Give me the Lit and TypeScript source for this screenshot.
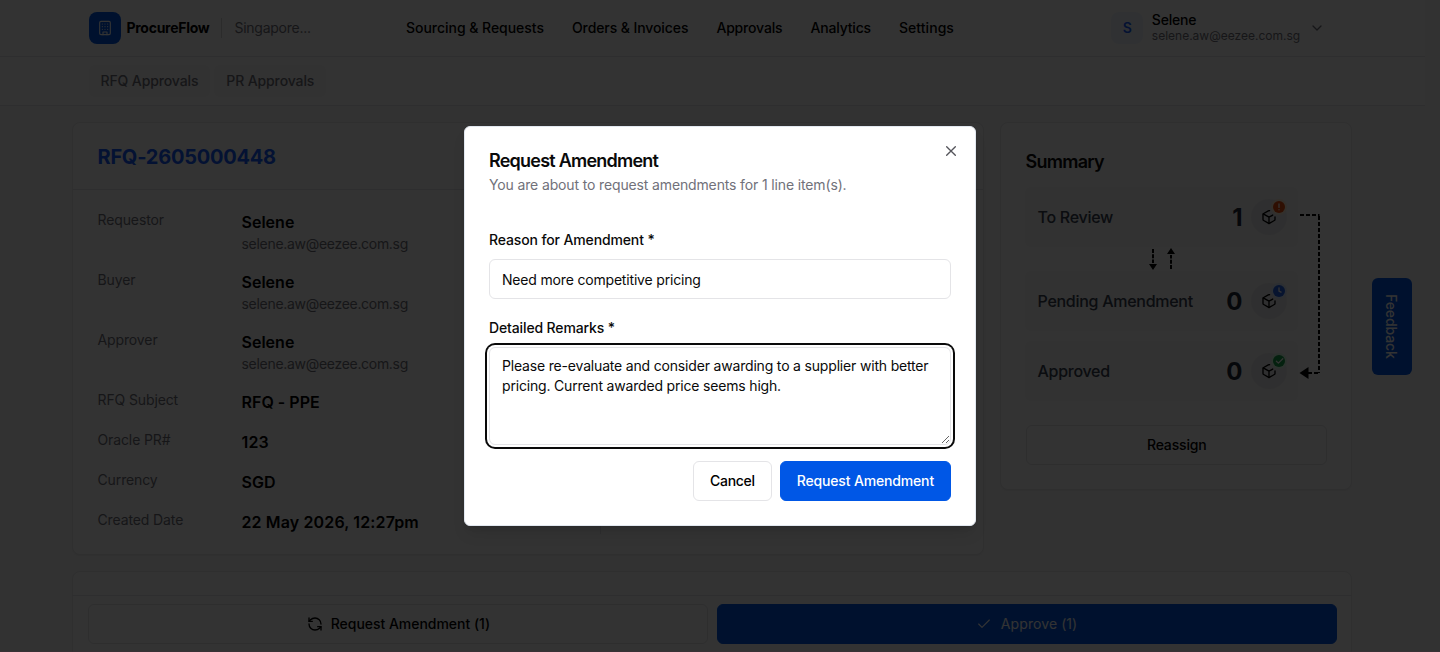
import { LitElement, html, css, svg } from "lit";
import { customElement } from "lit/decorators.js";

const stroke = (size: number, body: unknown, width = 2) => html`<svg
  width=${size} height=${size} viewBox="0 0 24 24" fill="none" stroke="currentColor"
  stroke-width=${width} stroke-linecap="round" stroke-linejoin="round">${body}</svg>`;

const building = svg`<rect x="4" y="2" width="16" height="20" rx="2"/><path d="M9 22v-4h6v4M8 6h.01M16 6h.01M12 6h.01M12 10h.01M12 14h.01M16 10h.01M16 14h.01M8 10h.01M8 14h.01"/>`;
const chevron = svg`<path d="m6 9 6 6 6-6"/>`;
const cross = svg`<path d="M18.500 5.500 5.500 18.500M5.500 5.500l13 13"/>`;
const check = svg`<path d="M20 6 9 17l-5-5"/>`;
const refresh = svg`<path d="M21 12a9 9 0 0 0-9-9 9.75 9.75 0 0 0-6.74 2.74L3 8"/><path d="M3 3v5h5"/><path d="M3 12a9 9 0 0 0 9 9 9.75 9.75 0 0 0 6.74-2.74L21 16"/><path d="M16 16h5v5"/>`;
const cube = svg`<path d="M12.8 2.6a2 2 0 0 0-1.8.1L4 6.7A2 2 0 0 0 3 8.5v7a2 2 0 0 0 1 1.8l7 4a2 2 0 0 0 2 0l7-4a2 2 0 0 0 1-1.8v-3.7"/><path d="M3.3 7.3 12 12.3l5.6-3.2M12 22V12.3"/>`;

const people = ["Requestor", "Buyer", "Approver"];
const facts = [
  ["RFQ Subject", "RFQ - PPE"],
  ["Oracle PR#", "123"],
  ["Currency", "SGD"],
  ["Created Date", "22 May 2026, 12:27pm"],
];
const email = "selene.aw@eezee.com.sg";

const badges: Record<string, unknown> = {
  review: svg`<path d="M6 3v3.4M6 8.7v.1"/>`,
  pending: svg`<path d="M6 2.8V6.2l2 1"/>`,
  approved: svg`<path d="m3.4 6.2 2 1.9 4.4-4.4"/>`,
};

@customElement("app-root")
export class AppRoot extends LitElement {
  static styles = css`
    :host {
      display: block;
      position: relative;
      width: 1440px;
      height: 652px;
      overflow: hidden;
      background: #fafafa;
      color: #0a0a0a;
      font: 14px/20px Inter, "Liberation Sans", sans-serif;
    }
    * { box-sizing: border-box; }
    svg { display: block; flex: none; }
    h1, h2, p { margin: 0; }
    .page { width: 1425px; height: 652px; overflow: hidden; }
    .wrap { width: 1280px; margin-left: 72px; padding: 0 16px 0 16.5px; display: flex; align-items: center; }
    .top { background: #fff; border-bottom: 1px solid #e5e7eb; color: #000; }
    .top .wrap { height: 56px; }
    .brand { width: 317.5px; display: flex; align-items: center; }
    .logo { width: 32px; height: 32px; border-radius: 8px; background: #0057e6; color: #fff; display: grid; place-items: center; }
    .name { margin-left: 6px; font-weight: 700; letter-spacing: -0.28px; }
    .org { margin-left: 12px; padding-left: 12px; border-left: 1px solid #d4d4d8; color: #71717a; letter-spacing: -0.25px; }
    .nav { display: flex; gap: 28px; font-weight: 500; white-space: nowrap; letter-spacing: -0.03px; }
    .nav span:nth-child(2) { letter-spacing: -0.09px; }
    .nav span:nth-child(3), .nav span:nth-child(4) { letter-spacing: -0.17px; }
    .nav span:nth-child(5) { letter-spacing: 0.05px; }
    .user { margin-left: auto; padding-right: 11.2px; display: flex; align-items: center; color: #71717a; }
    .avatar { width: 32px; height: 32px; border-radius: 8px; background: #eff6ff; color: #155dfc; font-weight: 600; display: grid; place-items: center; margin-right: 8.5px; }
    .who { width: 157px; font-size: 12px; line-height: 14px; padding-bottom: 3px; }
    .who b { display: block; font-size: 14px; line-height: 18px; font-weight: 500; color: #000; letter-spacing: -0.2px; }
    .sub { border-bottom: 1px solid #e5e7eb; background: #fff; }
    .sub .wrap { height: 48px; gap: 4px; }
    .tab { height: 32px; padding: 6px 12px; border-radius: 6px; background: #f8f8f8; color: #71717a; font-weight: 500; letter-spacing: -0.12px; }
    .main { width: 1280px; margin: 16px 0 0 72px; display: grid; grid-template-columns: 912px 352px; gap: 16px; align-items: start; }
    .card { background: #fff; border: 1px solid #e9eaec; border-radius: 8px; box-shadow: 0 1px 2px rgb(0 0 0 / 6%); }
    .head { height: 67px; padding: 20px 24.5px; border-bottom: 1px solid #e5e7eb; }
    .head h1 { font-size: 20px; line-height: 28px; font-weight: 700; color: #155dfc; letter-spacing: -0.25px; }
    .body { padding: 20px 24.5px; display: grid; grid-template-columns: 502px 1fr; }
    .rows { display: grid; gap: 16px; }
    .row { display: grid; grid-template-columns: 144px 1fr; color: #71717a; letter-spacing: -0.12px; }
    .mail { letter-spacing: -0.3px; }
    .row b { display: block; font-size: 16px; line-height: 24px; font-weight: 600; color: #000; letter-spacing: 0.02px; }
    .row b.num { letter-spacing: 0.13px; }
    .rule { border-left: 1px solid #e5e7eb; }
    .summary { padding: 24px 24px 24px 24.5px; }
    .title { font-size: 18px; line-height: 28px; font-weight: 600; letter-spacing: -0.77px; color: #0a0a0a; }
    .summary .title { padding-top: 1px; height: 28px; letter-spacing: -0.75px; }
    .flow { display: grid; grid-template-columns: 273px 29px; margin: 12px 0 0 -0.5px; }
    .stat { height: 60px; padding: 12px 11.5px 12px 12.5px; border-radius: 6px; background: #f8f8f8; display: flex; align-items: center; font-size: 16px; font-weight: 500; color: #374151; letter-spacing: -0.28px; }
    .stat strong { margin: 0 8px 0 auto; padding-top: 2px; font-size: 24px; font-weight: 700; color: #1f2937; letter-spacing: 0; }
    .disc { position: relative; width: 36px; height: 36px; border-radius: 50%; background: #ececee; color: #000; display: grid; place-items: center; }
    .badge { position: absolute; right: 2px; top: 2px; width: 12px; height: 12px; border-radius: 50%; stroke: #fff; }
    .badge.review { background: #ea4c0c; box-shadow: 0 0 0 2px #ffedd5; }
    .badge.pending { background: #2563eb; box-shadow: 0 0 0 2px #dbeafe; }
    .badge.approved { background: #16a34a; box-shadow: 0 0 0 2px #dcfce7; }
    .swap { height: 24px; }
    .gap { height: 10px; }
    .btn { height: 40px; border: 1px solid #e4e4e7; border-radius: 6px; background: #fff; color: #000; font-weight: 500; display: flex; align-items: center; justify-content: center; gap: 8px; padding: 0 16px; letter-spacing: -0.16px; white-space: nowrap; }
    .primary { background: #0057e6; border-color: #0057e6; color: #fff; }
    .cancel { letter-spacing: -0.28px; }
    .reassign { margin-top: 24px; padding-left: 17px; }
    .lower { width: 1280px; height: 100px; margin: 16px 0 0 72px; padding-top: 23px; }
    .bar { height: 58px; margin: 0 -1px; padding: 8px 15px 8px 16.4px; border-top: 1px solid #e5e7eb; display: grid; grid-template-columns: 620px 620px; gap: 8.2px; }
    .bar .btn { letter-spacing: -0.03px; }
    .bar .primary { gap: 9px; font-weight: 400; letter-spacing: 0.08px; }
    .feedback { position: absolute; left: 1371.5px; top: 278px; width: 40.5px; height: 96.5px; padding-right: 1px; border-radius: 6px; background: #0057e6; color: #fff; display: grid; place-items: center; writing-mode: vertical-rl; font-weight: 500; letter-spacing: -0.1px; }
    .shade { position: absolute; inset: 0; background: rgb(0 0 0 / 80%); border-bottom: 1px solid rgb(60 48 55 / 60%); display: grid; justify-content: center; align-content: start; padding-top: 126px; }
    .dialog { position: relative; width: 512px; height: 400px; padding: 24px; border: 1px solid #e2e8f0; border-radius: 6px; background: #fff; box-shadow: 0 10px 15px -3px rgb(0 0 0 / 10%), 0 4px 6px -4px rgb(0 0 0 / 10%); display: flex; flex-direction: column; }
    .dialog .title { line-height: 18px; padding-top: 1px; height: 18px; }
    .desc { margin-top: 6px; color: #71717a; letter-spacing: -0.14px; }
    .close { position: absolute; right: 16px; top: 16px; color: #54545a; }
    .label { font-weight: 500; letter-spacing: -0.13px; }
    .first { margin-top: 35px; }
    .second { margin-top: 19px; }
    .field { display: block; width: 100%; border: 1px solid #e4e4e7; border-radius: 6px; padding: 8px 12px; background: #fff; color: #0a0a0a; font: inherit; letter-spacing: -0.18px; outline: none; }
    .text { height: 40px; margin-top: 9px; padding-top: 9px; }
    .area { height: 98px; margin-top: 9px; resize: vertical; flex: none; box-shadow: 0 0 0 2px #fff, 0 0 0 4px #0a0a0a; }
    .foot { margin-top: 16px; display: flex; justify-content: flex-end; gap: 8px; }
  `;

  private stat(label: string, count: number, kind: string) {
    return html`<div class="stat">
      <span>${label}</span><strong>${count}</strong>
      <div class="disc">
        ${stroke(16, cube)}
        <svg class="badge ${kind}" viewBox="0 0 12 12" fill="none" stroke-width="1.3" stroke-linecap="round" stroke-linejoin="round">${badges[kind]}</svg>
      </div>
    </div>`;
  }

  render() {
    return html`
      <div class="page">
        <header class="top"><div class="wrap">
          <div class="brand">
            <div class="logo">${stroke(16, building, 1.7)}</div>
            <span class="name">ProcureFlow</span><span class="org">Singapore...</span>
          </div>
          <nav class="nav">
            ${["Sourcing & Requests", "Orders & Invoices", "Approvals", "Analytics", "Settings"].map((t) => html`<span>${t}</span>`)}
          </nav>
          <div class="user">
            <div class="avatar">S</div>
            <div class="who"><b>Selene</b>${email}</div>
            ${stroke(16, chevron)}
          </div>
        </div></header>
        <div class="sub"><div class="wrap">
          <span class="tab">RFQ Approvals</span><span class="tab">PR Approvals</span>
        </div></div>
        <div class="main">
          <section class="card">
            <div class="head"><h1>RFQ-2605000448</h1></div>
            <div class="body">
              <div class="rows">
                ${people.map((p) => html`<div class="row"><span>${p}</span><div class="mail"><b>Selene</b>${email}</div></div>`)}
                ${facts.map(([k, v]) => html`<div class="row"><span>${k}</span><b class=${/\d/.test(v) ? "num" : ""}>${v}</b></div>`)}
              </div>
              <div class="rule"></div>
            </div>
          </section>
          <section class="card summary">
            <h2 class="title">Summary</h2>
            <div class="flow">
              <div>
                ${this.stat("To Review", 1, "review")}
                <svg class="swap" width="273" height="24" viewBox="0 0 273 24">
                  <path d="M128 2v14M146 22V8" stroke="#000" stroke-width="2" stroke-dasharray="4 1.3"/>
                  <path d="M124 17h8l-4 6zM142 7h8l-4-6z"/>
                </svg>
                ${this.stat("Pending Amendment", 0, "pending")}
                <div class="gap"></div>
                ${this.stat("Approved", 0, "approved")}
              </div>
              <svg width="29" height="214" viewBox="0 0 29 214" fill="none">
                <path d="M2 28h19.500M21 29v157M20 186H10" stroke="#000" stroke-width="2" stroke-dasharray="4 2"/>
                <path d="M1.500 186l9-6v12z" fill="#000"/>
              </svg>
            </div>
            <div class="btn reassign">Reassign</div>
          </section>
        </div>
        <section class="card lower">
          <div class="bar">
            <div class="btn">${stroke(16, refresh)}Request Amendment (1)</div>
            <div class="btn primary">${stroke(16, check, 1.7)}Approve (1)</div>
          </div>
        </section>
      </div>
      <div class="feedback">Feedback</div>
      <div class="shade">
        <div class="dialog" role="dialog">
          <h2 class="title">Request Amendment</h2>
          <p class="desc">You are about to request amendments for 1 line item(s).</p>
          <div class="close">${stroke(16, cross)}</div>
          <label class="label first">Reason for Amendment *</label>
          <input class="field text" .value=${"Need more competitive pricing"} />
          <label class="label second">Detailed Remarks *</label>
          <textarea class="field area" .value=${"Please re-evaluate and consider awarding to a supplier with better pricing. Current awarded price seems high."}></textarea>
          <div class="foot">
            <div class="btn cancel">Cancel</div>
            <div class="btn primary">Request Amendment</div>
          </div>
        </div>
      </div>
    `;
  }
}
